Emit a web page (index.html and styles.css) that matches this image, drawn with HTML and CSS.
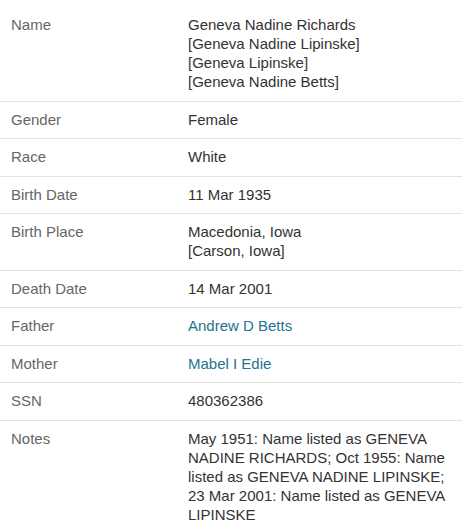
FILE: index.html
```html
<!DOCTYPE html>
<html lang="en">
<head>
<meta charset="utf-8">
<title>Record</title>
<link rel="stylesheet" href="styles.css">
</head>
<body>
<div class="record">
  <div class="row"><div class="label">Name</div><div class="value">Geneva Nadine Richards<br>[Geneva Nadine Lipinske]<br>[Geneva Lipinske]<br>[Geneva Nadine Betts]</div></div>
  <div class="row"><div class="label">Gender</div><div class="value">Female</div></div>
  <div class="row"><div class="label">Race</div><div class="value">White</div></div>
  <div class="row"><div class="label">Birth Date</div><div class="value">11 Mar 1935</div></div>
  <div class="row"><div class="label">Birth Place</div><div class="value">Macedonia, Iowa<br>[Carson, Iowa]</div></div>
  <div class="row"><div class="label">Death Date</div><div class="value">14 Mar 2001</div></div>
  <div class="row"><div class="label">Father</div><div class="value"><a class="link" href="#">Andrew D Betts</a></div></div>
  <div class="row"><div class="label">Mother</div><div class="value"><a class="link" href="#">Mabel I Edie</a></div></div>
  <div class="row"><div class="label">SSN</div><div class="value">480362386</div></div>
  <div class="row last"><div class="label">Notes</div><div class="value">May 1951: Name listed as GENEVA NADINE RICHARDS; Oct 1955: Name listed as GENEVA NADINE LIPINSKE; 23 Mar 2001: Name listed as GENEVA LIPINSKE</div></div>
</div>
</body>
</html>
```

FILE: styles.css
```css
html, body {
  margin: 0;
  padding: 0;
  background: #ffffff;
}
body {
  font-family: "Liberation Sans", Arial, Helvetica, sans-serif;
  font-size: 15px;
  line-height: 19px;
  color: #333333;
}
.record {
  padding-top: 7px;
}
.row {
  display: grid;
  grid-template-columns: 177px 1fr;
  padding: 8px 8px 9.5px 11px;
  border-bottom: 1px solid #e2e2e2;
}
.row.last {
  border-bottom: none;
}
.label {
  color: #666666;
}
.value {
  color: #333333;
}
.link {
  color: #24728f;
  text-decoration: none;
}
```
